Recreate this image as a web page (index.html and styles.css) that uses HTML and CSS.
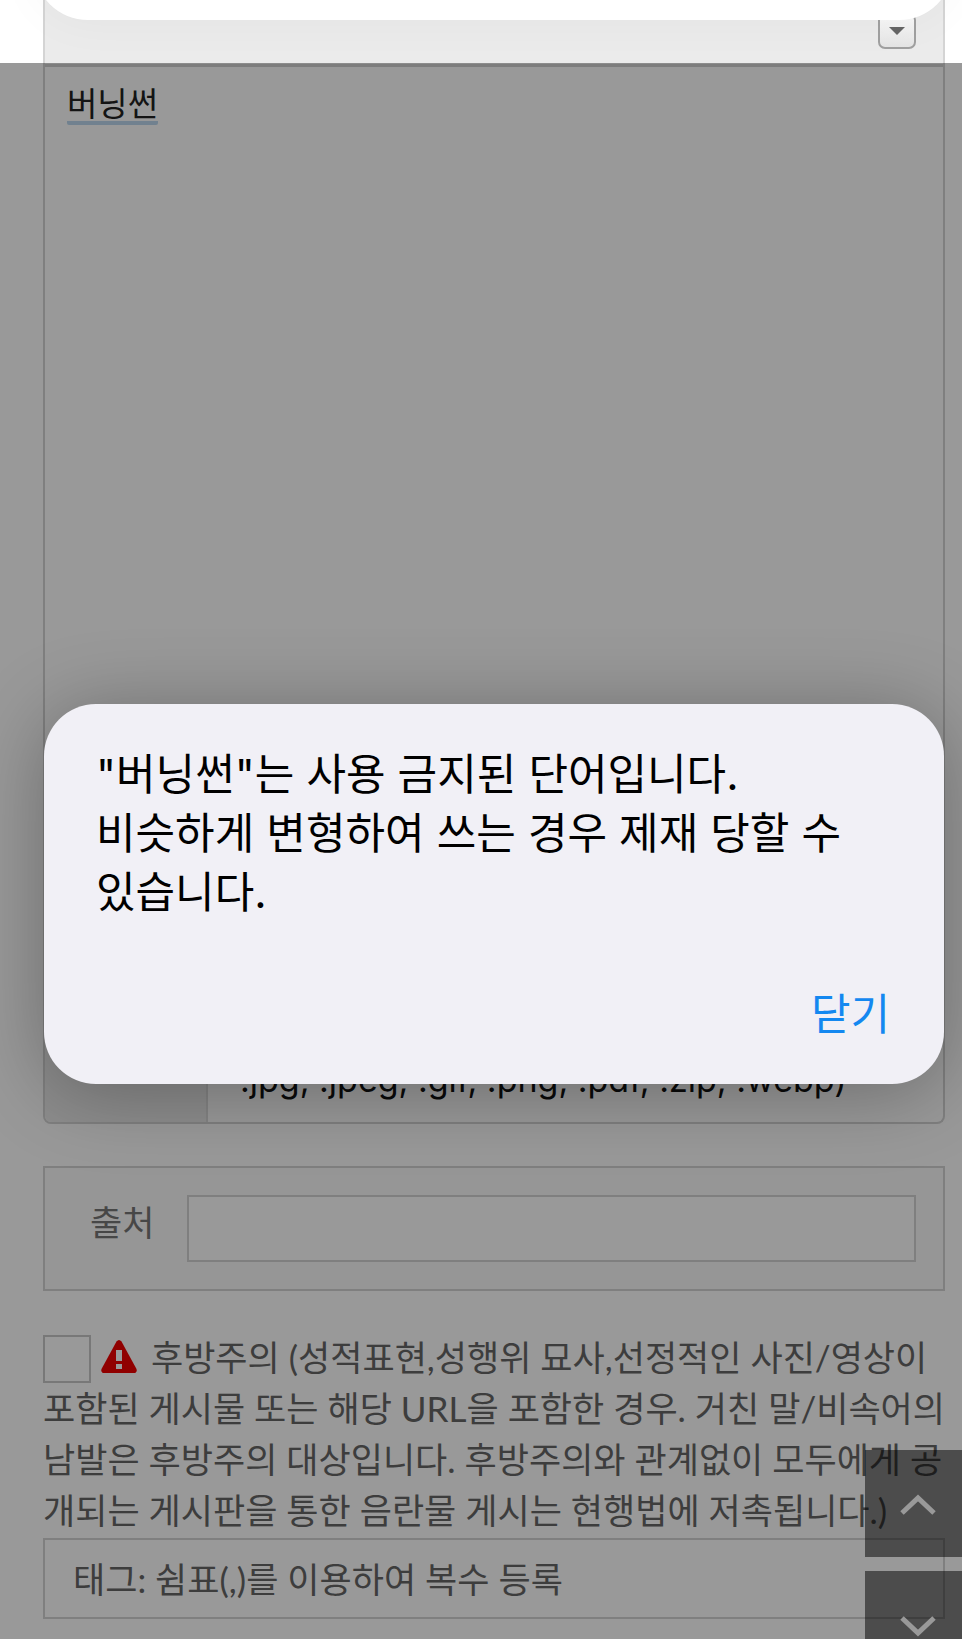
FILE: index.html
```html
<!DOCTYPE html>
<html lang="ko">
<head>
    <meta charset="UTF-8">
    <meta name="viewport" content="width=device-width, initial-scale=1.0">
    <title>글쓰기</title>
    <link rel="stylesheet" href="styles.css">
</head>
<body>
    <div class="screen">
        <form class="write-form">
            <div class="editor">
                <div class="toolbar">
                    <button type="button" class="toolbar-more" aria-label="더보기">
                        <svg width="16" height="8" viewBox="0 0 16 8"><path d="M0 0h16L8 8z" fill="#666"/></svg>
                    </button>
                </div>
                <div class="editor-content" contenteditable="true" role="textbox" aria-label="본문" spellcheck="false"><span class="composing">버닝썬</span></div>
                <div class="file-row">
                    <div class="file-head"></div>
                    <div class="file-types">.jpg, .jpeg, .gif, .png, .pdf, .zip, .webp)</div>
                </div>
            </div>

            <div class="source-box">
                <label for="source">출처</label>
                <input type="text" id="source" class="source-input">
            </div>

            <div class="notice">
                <input type="checkbox" id="caution" class="notice-check">
                <label for="caution"><svg class="warn-icon" width="36" height="33" viewBox="0 0 36 33"><path d="M15.500 1.500Q18-1.500 20.500 1.500L35.500 29Q36.500 33 32.500 33H3.500Q-.5 33 .5 29Z" fill="#f00000"/><path d="M15 10h6v11h-6zM15 24h6v5h-6z" fill="#fff"/></svg> 후방주의 (성적표현,성행위 묘사,선정적인 사진/영상이 포함된 게시물 또는 해당 URL을 포함한 경우. 거친 말/비속어의 남발은 후방주의 대상입니다. 후방주의와 관계없이 모두에게 공개되는 게시판을 통한 음란물 게시는 현행법에 저촉됩니다.)</label>
            </div>

            <input type="text" class="tag-input" aria-label="태그" placeholder="태그: 쉼표(,)를 이용하여 복수 등록">
        </form>

        <div class="top-sheet"></div>

        <nav class="page-move">
            <button type="button" aria-label="맨 위로">
                <svg width="36" height="22" viewBox="0 0 36 22"><path d="M2 19L18 4l16 15" fill="none" stroke="#fff" stroke-width="5"/></svg>
            </button>
            <button type="button" aria-label="맨 아래로">
                <svg width="36" height="22" viewBox="0 0 36 22"><path d="M2 3l16 15L34 3" fill="none" stroke="#fff" stroke-width="5"/></svg>
            </button>
        </nav>

        <div class="overlay">
            <div class="dialog" role="alertdialog" aria-modal="true" aria-describedby="alertText">
                <p id="alertText">"버닝썬"는 사용 금지된 단어입니다.<br>비슷하게 변형하여 쓰는 경우 제재 당할 수 있습니다.</p>
                <button type="button" class="dialog-close">닫기</button>
            </div>
        </div>
    </div>
</body>
</html>
```
FILE: styles.css
```css
* {
    margin: 0;
    padding: 0;
    box-sizing: border-box;
}

body {
    font-family: Lato, "Noto Sans CJK KR", sans-serif;
    font-size: 35px;
    line-height: 51px;
    color: #666;
    background: #fff;
}

button,
input {
    font: inherit;
    color: inherit;
}

.screen {
    position: relative;
    height: 100vh;
    overflow: hidden;
}

.write-form {
    padding: 0 17px 0 43px;
}

/* 에디터 */
.editor {
    border: 2px solid #d4d4d4;
    border-top: none;
    border-radius: 0 0 8px 8px;
    margin-bottom: 42px;
    overflow: hidden;
}

.toolbar {
    display: flex;
    justify-content: flex-end;
    align-items: flex-end;
    height: 67px;
    padding: 0 27px 15px;
    background: #ebebeb;
    border-bottom: 3px solid #d0d0d0;
}

.toolbar-more {
    display: flex;
    align-items: center;
    justify-content: center;
    width: 38px;
    height: 36px;
    background: linear-gradient(#fafafa, #e4e4e4);
    border: 2px solid #a0a0a0;
    border-radius: 7px;
}

.editor-content {
    min-height: 844px;
    padding: 12px 22px;
    font-size: 33px;
    line-height: 48px;
    color: #222;
    outline: none;
}

.composing {
    display: inline-block;
    height: 46px;
    border-bottom: 4px solid #bdd8ee;
    border-radius: 2px;
}

.file-row {
    display: flex;
    height: 211px;
}

.file-head {
    width: 163px;
    background: #ebebeb;
    border-right: 2px solid #dcdcdc;
}

.file-types {
    flex: 1;
    align-self: flex-end;
    padding: 0 32px 18px;
    font-family: Inter, sans-serif;
    font-size: 34px;
    line-height: 48px;
    color: #111;
}

/* 출처 */
.source-box {
    display: flex;
    align-items: center;
    gap: 33px;
    padding: 27px 27px 27px 45px;
    margin-bottom: 41px;
    background: #fafafa;
    border: 2px solid #d4d4d4;
    color: #777;
}

.source-box label {
    padding-bottom: 12px;
}

.source-input {
    flex: 1;
    min-width: 0;
    height: 67px;
    padding: 0 16px;
    background: #fff;
    border: 2px solid #d4d4d4;
}

/* 후방주의 */
.notice {
    word-break: break-all;
    margin-bottom: 2px;
}

.notice-check {
    appearance: none;
    width: 48px;
    height: 48px;
    margin-top: 3px;
    border: 2px solid #c8c8c8;
    background: #fff;
    vertical-align: top;
}

.warn-icon {
    margin: 0 5px 0 1px;
    vertical-align: -2px;
}

.tag-input {
    display: block;
    width: 100%;
    height: 81px;
    padding: 0 28px;
    background: #fff;
    border: 2px solid #d4d4d4;
}

.tag-input::placeholder {
    color: #666;
    opacity: 1;
}

.top-sheet {
    position: absolute;
    top: -100px;
    left: 34px;
    right: 9px;
    height: 120px;
    background: #fff;
    border-radius: 54px;
    box-shadow: 0 0 50px rgba(0, 0, 0, 0.04);
}

/* 위아래 이동 버튼 */
.page-move {
    position: absolute;
    top: 1450px;
    right: 0;
    display: flex;
    flex-direction: column;
    gap: 14px;
}

.page-move button {
    display: flex;
    align-items: center;
    justify-content: center;
    width: 97px;
    height: 107px;
    padding: 2px 0 0 8px;
    background: rgba(0, 0, 0, 0.5);
    border: none;
}

/* 알림창 */
.overlay {
    position: absolute;
    top: 63px;
    left: 0;
    right: 0;
    bottom: 0;
    display: flex;
    align-items: center;
    padding: 86px 18px 0 44px;
    background: rgba(0, 0, 0, 0.4);
}

.dialog {
    flex: 1;
    display: flex;
    flex-direction: column;
    gap: 63px;
    padding: 41px 54px 40px 52px;
    font-family: Inter, "Noto Sans CJK KR", sans-serif;
    font-size: 43px;
    line-height: 59px;
    word-break: keep-all;
    color: #000;
    background: #f1f0f6;
    border-radius: 52px;
    box-shadow: 0 8px 80px rgba(0, 0, 0, 0.3);
}

.dialog-close {
    align-self: flex-end;
    color: #1488f0;
    background: none;
    border: none;
    cursor: pointer;
}
```
